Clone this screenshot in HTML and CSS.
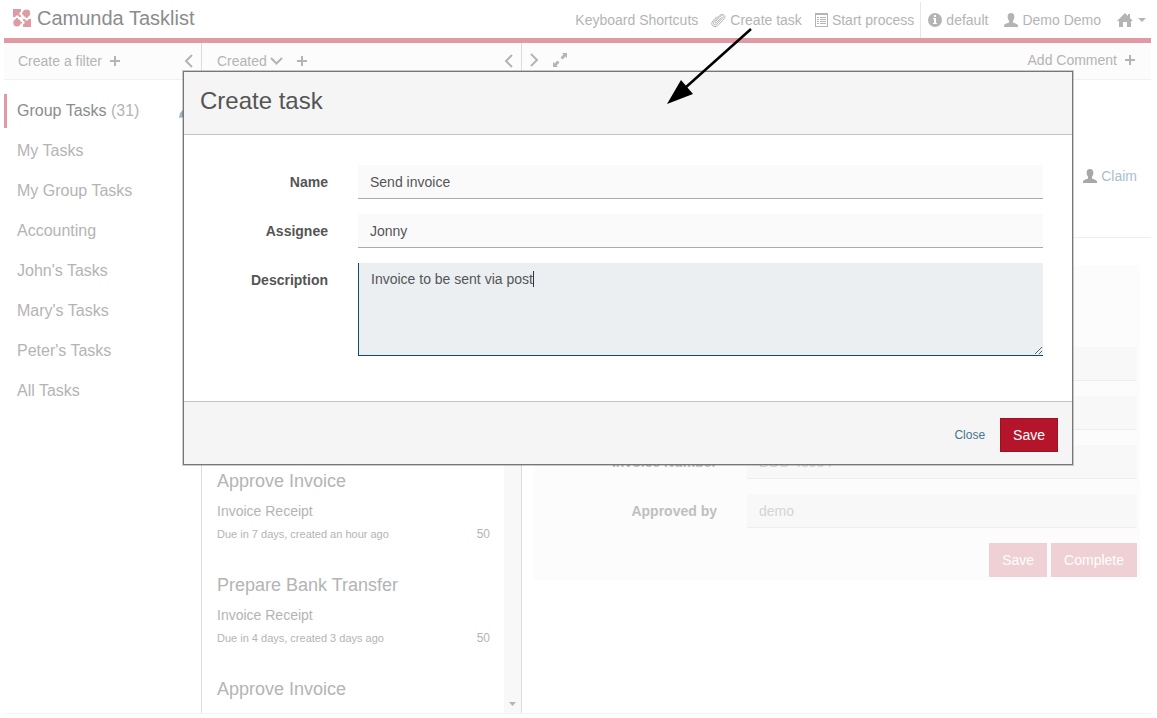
FILE: index.html
```html
<!DOCTYPE html>
<html lang="en">
<head>
<meta charset="utf-8">
<title>Camunda Tasklist</title>
<link rel="stylesheet" href="styles.css">
</head>
<body>
<div class="app">
  <header class="topbar">
    <a class="brand" href="#">
      <svg class="brand-logo" width="18" height="18" viewBox="0 0 18 18" aria-hidden="true">
        <path d="M0 0h8v2.500L6.500 3.500v2L8 6.500V8H6.300L5.300 6.500h-2L2.300 8H0z"/>
        <circle cx="13.500" cy="4.200" r="3.700"/><path d="M9 3.500h2v1.800H9zM12.600 7h1.800v2h-1.800z"/>
        <circle cx="4" cy="13.700" r="3.700"/><path d="M7 12.800h2v1.800H7zM3.100 9h1.800v2H3.100z"/>
        <path d="M10 10h1.700l1 1.500h2l1-1.500H18v8h-8v-2.500l1.500-1v-2L10 11.500z"/>
      </svg>
      <span>Camunda Tasklist</span>
    </a>
    <nav class="nav">
      <a class="nav-item" href="#">Keyboard Shortcuts</a>
      <a class="nav-item" href="#">
        <svg class="icon" width="15" height="15" viewBox="0 0 15 15" aria-hidden="true"><path class="line" d="M10.500 4.500 5.500 9.700c-1 1-2 0-1.200-1L9.600 3c1.500-1.500 3.500.3 2 2L5.800 11.200c-2 2-4.800-.3-2.700-2.700L8.700 2.500C11.500-.3 16 2.800 13 6L6.800 12.500c-3.300 3.300-8.300-.8-5-4.500L6 3.500"/></svg>
        <span>Create task</span>
      </a>
      <a class="nav-item" href="#">
        <svg class="icon" width="13" height="14" viewBox="0 0 13 14" aria-hidden="true"><path fill-rule="evenodd" d="M0 0h13v14H0zM1 2v11h11V2zM2 4h2v1H2zM5 4h6v1H5zM2 6h2v1H2zM5 6h6v1H5zM2 8h2v1H2zM5 8h6v1H5zM2 10h2v1H2zM5 10h6v1H5z"/></svg>
        <span>Start process</span>
      </a>
      <a class="nav-item nav-engine" href="#">
        <svg class="icon" width="14" height="14" viewBox="0 0 14 14" aria-hidden="true"><path fill-rule="evenodd" d="M7 0a7 7 0 1 1 0 14A7 7 0 0 1 7 0zM6 2v2h2V2zM5 5v1h1v4H5v1h4v-1H8V5z"/></svg>
        <span>default</span>
      </a>
      <a class="nav-item nav-user" href="#">
        <svg class="icon" width="14" height="14" viewBox="0 0 14 14" aria-hidden="true"><path d="M7 0c2.300 0 3.500 1.500 3.400 4C10.300 6 9.500 7 9 7.800V9.500c1 .8 4.500 1 5 3V14H0v-1.500c.5-2 4-2.200 5-3V7.800C4.500 7 3.700 6 3.600 4 3.500 1.500 4.700 0 7 0z"/></svg>
        <span>Demo Demo</span>
      </a>
      <a class="nav-item nav-home" href="#" aria-label="Home">
        <svg class="icon" width="16" height="14" viewBox="0 0 16 14" aria-hidden="true"><path d="M8 0l3 3V1h2v4l3 3h-2v6h-4V9H6v5H2V8H0z"/></svg>
        <svg class="icon" width="8" height="4" viewBox="0 0 8 4" aria-hidden="true"><path d="M0 0h8L4 4z"/></svg>
      </a>
    </nav>
  </header>

  <main class="columns">
    <section class="col filters">
      <div class="toolbar">
        <button class="tool" type="button">Create a filter
          <svg class="icon" width="10" height="10" viewBox="0 0 10 10" aria-hidden="true"><path d="M4 0h2v4h4v2H6v4H4V6H0V4h4z"/></svg></button>
        <button class="tool push" type="button" aria-label="Collapse filters">
          <svg class="icon" width="9" height="14" viewBox="0 0 9 14" aria-hidden="true"><path class="chev" d="M8 1 2 7l6 6"/></svg></button>
      </div>
      <ul class="filter-list">
        <li class="filter active"><a href="#">Group Tasks <span class="count">(31)</span></a>
          <svg class="pencil" width="14" height="14" viewBox="0 0 14 14" aria-hidden="true"><path d="M0 14l1-5 8-8 4 4-8 8z"/></svg></li>
        <li class="filter"><a href="#">My Tasks</a></li>
        <li class="filter"><a href="#">My Group Tasks</a></li>
        <li class="filter"><a href="#">Accounting</a></li>
        <li class="filter"><a href="#">John's Tasks</a></li>
        <li class="filter"><a href="#">Mary's Tasks</a></li>
        <li class="filter"><a href="#">Peter's Tasks</a></li>
        <li class="filter"><a href="#">All Tasks</a></li>
      </ul>
    </section>

    <section class="col tasks">
      <div class="toolbar">
        <button class="tool sort" type="button">Created
          <svg class="icon" width="13" height="8" viewBox="0 0 13 8" aria-hidden="true"><path class="chev" d="M1 1l5.500 5.500L12 1"/></svg></button>
        <button class="tool" type="button" aria-label="Add sorting">
          <svg class="icon" width="10" height="10" viewBox="0 0 10 10" aria-hidden="true"><path d="M4 0h2v4h4v2H6v4H4V6H0V4h4z"/></svg></button>
        <button class="tool push" type="button" aria-label="Collapse tasks">
          <svg class="icon" width="9" height="14" viewBox="0 0 9 14" aria-hidden="true"><path class="chev" d="M8 1 2 7l6 6"/></svg></button>
      </div>
      <div class="task-scroll">
        <ul class="task-list">
          <li class="task">
            <h2>Approve Invoice</h2>
            <p class="process">Invoice Receipt</p>
            <p class="meta"><span class="dates">Due in 7 days, created an hour ago</span><span>50</span></p>
          </li>
          <li class="task">
            <h2>Prepare Bank Transfer</h2>
            <p class="process">Invoice Receipt</p>
            <p class="meta"><span class="dates">Due in 4 days, created 3 days ago</span><span>50</span></p>
          </li>
          <li class="task">
            <h2>Approve Invoice</h2>
          </li>
        </ul>
        <div class="scrollbar">
          <svg class="icon" width="7" height="4" viewBox="0 0 7 4" aria-hidden="true"><path d="M0 0h7L3.500 4z"/></svg>
        </div>
      </div>
    </section>

    <section class="col detail">
      <div class="toolbar">
        <button class="tool" type="button" aria-label="Expand">
          <svg class="icon" width="9" height="14" viewBox="0 0 9 14" aria-hidden="true"><path class="chev" d="M1 1l6 6-6 6"/></svg></button>
        <button class="tool full" type="button" aria-label="Full screen">
          <svg class="icon" width="14" height="14" viewBox="0 0 14 14" aria-hidden="true"><path d="M9 0h5v5l-1.500-1.500-3 3-2-2 3-3zM5 14H0V9l1.500 1.500 3-3 2 2-3 3z"/></svg></button>
        <button class="tool push comment" type="button">Add Comment
          <svg class="icon" width="10" height="10" viewBox="0 0 10 10" aria-hidden="true"><path d="M4 0h2v4h4v2H6v4H4V6H0V4h4z"/></svg></button>
      </div>
      <div class="task-head">
        <button class="claim" type="button">
          <svg class="icon" width="14" height="14" viewBox="0 0 14 14" aria-hidden="true"><path d="M7 0c2.300 0 3.500 1.500 3.400 4C10.300 6 9.500 7 9 7.800V9.500c1 .8 4.500 1 5 3V14H0v-1.500c.5-2 4-2.200 5-3V7.800C4.500 7 3.700 6 3.600 4 3.500 1.500 4.700 0 7 0z"/></svg>
          Claim</button>
      </div>
      <form class="task-form">
        <div class="row"><span></span><input class="field" type="text" aria-label="Amount" readonly></div>
        <div class="row"><span></span><input class="field" type="text" aria-label="Creditor" readonly></div>
        <div class="row"><label for="number">Invoice Number</label><input class="field" id="number" type="text" value="BOS-43934" readonly></div>
        <div class="row"><label for="approver">Approved by</label><input class="field" id="approver" type="text" value="demo" readonly></div>
        <div class="actions">
          <button class="btn faded" type="button">Save</button>
          <button class="btn faded" type="button">Complete</button>
        </div>
      </form>
    </section>
  </main>
</div>

<div class="modal" role="dialog" aria-labelledby="modal-title">
  <header class="modal-head"><h1 id="modal-title">Create task</h1></header>
  <form class="modal-body">
    <label for="name">Name</label>
    <input id="name" class="input" type="text" value="Send invoice">
    <label for="assignee">Assignee</label>
    <input id="assignee" class="input" type="text" value="Jonny">
    <label for="description">Description</label>
    <div class="area"><textarea id="description" class="input">Invoice to be sent via post</textarea><span class="caret"></span></div>
  </form>
  <footer class="modal-foot">
    <button class="close" type="button">Close</button>
    <button class="btn" type="button">Save</button>
  </footer>
</div>

<svg class="pointer" width="86" height="78" viewBox="0 0 86 78" aria-hidden="true">
  <path d="M84 1 18 60" fill="none" stroke="#000" stroke-width="2.500"/>
  <path d="M0 76 14 52 26 66z"/>
</svg>
</body>
</html>
```

FILE: styles.css
```css
* { box-sizing: border-box; }
html, body { height: 100%; }
body {
  margin: 0;
  position: relative;
  overflow: hidden;
  background: #fff;
  color: #b4b4b4;
  font: 14px/20px "Liberation Sans", Arial, sans-serif;
}
a { color: inherit; text-decoration: none; }
ul { list-style: none; margin: 0; padding: 0; }
h1, h2, p { margin: 0; font-weight: normal; }
button, input, textarea { font: inherit; color: inherit; border: 0; border-radius: 0; }
button { background: none; padding: 0; cursor: pointer; }
.icon { fill: #b4b4b4; flex: none; }
.line { fill: none; stroke: #b4b4b4; stroke-width: 1; }
.chev { fill: none; stroke: #b4b4b4; stroke-width: 2; }

.app {
  height: 100%;
  padding: 0 6px 4px 4px;
  display: flex;
  flex-direction: column;
}

.topbar {
  height: 43px;
  flex: none;
  display: flex;
  justify-content: space-between;
  border-bottom: 5px solid #df9aa3;
}
.brand {
  display: flex;
  align-items: center;
  gap: 6px;
  padding: 0 0 2px 9px;
  font-size: 20px;
  color: #8c8c8c;
}
.brand-logo { fill: #df9aa3; }
.nav { display: flex; padding: 2px 5px 0 0; }
.nav-item { display: flex; align-items: center; gap: 4px; margin-left: 13px; }
.nav-engine { margin-left: 6px; padding-left: 7px; border-left: 1px solid #e6e6e6; }
.nav-user, .nav-home { margin-left: 16px; }
.nav-home { gap: 5px; }

.columns {
  flex: 1;
  min-height: 0;
  display: grid;
  grid-template-columns: 198px 320px 1fr;
  border-bottom: 1px solid #f4f4f4;
}
.col { min-width: 0; min-height: 0; display: flex; flex-direction: column; }
.filters, .tasks { border-right: 1px solid #dcdcdc; }
.toolbar {
  height: 37px;
  flex: none;
  display: flex;
  align-items: center;
  gap: 14px;
  padding: 0 8px 2px 14px;
  background: #fcfcfc;
  border-bottom: 1px solid #f1f1f1;
}
.filters .toolbar, .tasks .toolbar { padding-bottom: 0; }
.tasks .toolbar { padding-left: 15px; }
.tool { display: flex; align-items: center; gap: 8px; }
.sort { gap: 3px; }
.push { margin-left: auto; }
.detail .toolbar { padding: 0 16px 2px 8px; }

.filter-list { padding-top: 11px; }
.filter {
  height: 40px;
  padding-left: 10px;
  border: 0 solid transparent;
  border-width: 3px 0 3px 3px;
  display: flex;
  align-items: center;
  justify-content: space-between;
  font-size: 16px;
}
.active { color: #8c8c8c; background: linear-gradient(#df9aa3, #df9aa3) left / 3px 34px no-repeat border-box; }
.count { color: #b4b4b4; }
.pencil { fill: #9fb5c0; margin-right: 8px; }

.task-scroll { flex: 1; min-height: 0; display: flex; overflow: hidden; }
.task-list { flex: 1; padding: 389px 14px 0 15px; }
.task { height: 104px; }
.task h2 { font-size: 18px; line-height: 24px; }
.process { margin-top: 8px; }
.meta { display: flex; justify-content: space-between; margin-top: 3px; font-size: 12px; }
.dates { font-size: 11px; }
.scrollbar {
  width: 17px;
  background: #f8f8f8;
  display: flex;
  align-items: flex-end;
  justify-content: center;
  padding-bottom: 7px;
}

.task-head {
  flex: none;
  height: 158px;
  display: flex;
  justify-content: flex-end;
  align-items: flex-start;
  padding: 86px 14px 0 0;
  border-bottom: 1px solid #eee;
}
.claim { display: flex; align-items: center; gap: 4px; color: #a9c0cb; }
.claim .icon { fill: #a8a8a8; }
.task-form {
  margin: 27px 11px 0 12px;
  padding: 82px 3px 3px 0;
  background: #fcfcfc;
  display: grid;
  gap: 15px;
}
.row {
  display: grid;
  grid-template-columns: 183px 1fr;
  gap: 30px;
  align-items: center;
}
.row label { text-align: right; font-weight: bold; color: #bfbfbf; }
.field {
  width: 100%;
  height: 34px;
  padding: 0 12px;
  background: #f8f8f8;
  border-bottom: 1px solid #eee;
  color: #d4d4d4;
}
.actions { display: flex; justify-content: flex-end; gap: 4px; }
.btn {
  height: 34px;
  padding: 0 12px;
  border: 1px solid #9d1127;
  background: #b5152b;
  color: #fff;
}
.faded { background: #efd0d4; border-color: #efd0d4; }

.modal {
  position: absolute;
  top: 71px;
  left: 183px;
  right: 84px;
  border: 1px solid #777;
  box-shadow: 0 0 0 1px rgba(0, 0, 0, 0.2);
  background: #fff;
  color: #555;
}
.modal-head {
  padding: 14px 16px 18px;
  background: #f5f5f5;
  border-bottom: 1px solid #c5c5c5;
}
.modal-head h1 { font-size: 24px; line-height: 30px; }
.modal-body {
  display: grid;
  grid-template-columns: 115px 1fr;
  gap: 15px 30px;
  padding: 30px 29px 45px;
}
.modal-body label { padding-top: 7px; text-align: right; font-weight: bold; }
.input {
  display: block;
  width: 100%;
  height: 34px;
  padding: 0 12px;
  background: #fafafa;
  border-bottom: 1px solid #aaa;
  outline: 0;
}
.area { position: relative; }
.area .input {
  height: 93px;
  padding: 6px 12px;
  background: #ebeff2;
  border-left: 1px solid #0c4d63;
  border-bottom-color: #0c4d63;
  resize: vertical;
}
.caret {
  position: absolute;
  top: 8px;
  left: 175px;
  width: 1px;
  height: 16px;
  background: #333;
}
.modal-foot {
  display: flex;
  justify-content: flex-end;
  align-items: center;
  gap: 15px;
  padding: 16px 14px 12px;
  background: #f5f5f5;
  border-top: 1px solid #c5c5c5;
}
.close { font-size: 12px; color: #44768d; }

.pointer { position: absolute; top: 28px; left: 667px; }
```
